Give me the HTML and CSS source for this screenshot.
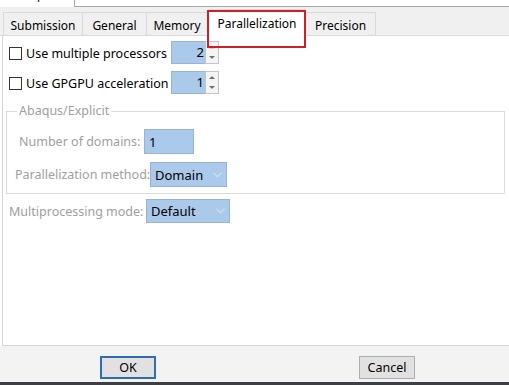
FILE: index.html
```html
<!DOCTYPE html>
<html>
<head>
<meta charset="utf-8">
<link rel="stylesheet" href="styles.css">
</head>
<body>
<div class="top">
  <div class="top-left"><span class="cut">p</span></div>
  <div class="top-right"></div>
</div>
<div class="tabstrip">
  <div class="tab t1">Submission</div>
  <div class="tab t2">General</div>
  <div class="tab t3">Memory</div>
  <div class="tab t4 active">Parallelization</div>
  <div class="tab t5">Precision</div>
</div>
<div class="panel">
  <div class="row chkrow">
    <label class="chk"><span class="box"></span><span class="chk-text">Use multiple processors</span></label>
    <div class="spin">
      <div class="spin-field">2</div>
      <div class="spin-btns">
        <span class="arr up faint"></span>
        <span class="arr down"></span>
      </div>
    </div>
  </div>
  <div class="row chkrow">
    <label class="chk"><span class="box"></span><span class="chk-text">Use GPGPU acceleration</span></label>
    <div class="spin">
      <div class="spin-field">1</div>
      <div class="spin-btns">
        <span class="arr up"></span>
        <span class="arr down"></span>
      </div>
    </div>
  </div>
  <fieldset class="group">
    <legend>Abaqus/Explicit</legend>
    <div class="frow f1">
      <span class="lbl l1">Number of domains:</span>
      <div class="field num">1</div>
    </div>
    <div class="frow f2">
      <span class="lbl l2">Parallelization method:</span>
      <div class="field combo c1"><span>Domain</span>
        <svg class="chev" width="9" height="6" viewBox="0 0 9 6"><polyline points="0.5,0.8 4.5,4.8 8.5,0.8" fill="none" stroke="#d3dae3" stroke-width="1.4"/></svg>
      </div>
    </div>
  </fieldset>
  <div class="frow f3">
    <span class="lbl l3">Multiprocessing mode:</span>
    <div class="field combo c2"><span>Default</span>
      <svg class="chev" width="9" height="6" viewBox="0 0 9 6"><polyline points="0.5,0.8 4.5,4.8 8.5,0.8" fill="none" stroke="#d3dae3" stroke-width="1.4"/></svg>
    </div>
  </div>
</div>
<div class="buttons">
  <button class="btn ok">OK</button>
  <button class="btn cancel">Cancel</button>
</div>
<div class="darkbar"></div>
<div class="highlight"></div>
</body>
</html>
```
FILE: styles.css
```css
html, body { margin: 0; padding: 0; }
body {
  width: 509px;
  height: 385px;
  overflow: hidden;
  display: flex;
  flex-direction: column;
  background: #ffffff;
  font-family: "Noto Sans", "Open Sans", sans-serif;
  font-size: 12.5px;
  color: #000;
  position: relative;
}
.top { height: 7px; display: flex; flex: none; }
.top-left {
  width: 74px;
  border-right: 1px solid #a8a8a8;
  overflow: hidden;
  background: #fff;
}
.cut {
  display: block;
  margin-top: -13px;
  margin-left: 37px;
  line-height: 16px;
  font-size: 12px;
}
.top-right { flex: 1; border-bottom: 1px solid #a8a8a8; background: #fff; }
.tabstrip {
  flex: none;
  height: 28px;
  background: #f0f0f0;
  border-bottom: 1px solid #d9d9d9;
  display: grid;
  grid-template-columns: 80px 64px 61px 98px 70px;
  align-items: end;
  padding-left: 3px;
  font-size: 12px;
}
.tab {
  height: 23px;
  box-sizing: border-box;
  border: 1px solid #d9d9d9;
  border-bottom: none;
  border-left: none;
  display: flex;
  align-items: center;
  justify-content: center;
  padding-top: 2px;
  background: #f0f0f0;
  color: #000;
}
.tab.t1 { border-left: 1px solid #d9d9d9; }
.tab.active {
  height: 27px;
  background: #fff;
  margin-bottom: -1px;
  padding-top: 1px;
  padding-bottom: 0;
  border-left: 1px solid #d9d9d9;
  position: relative;
  z-index: 1;
}
.panel {
  flex: 1;
  margin-left: 2px;
  border-left: 1px solid #d4d4d4;
  border-bottom: 1px solid #d4d4d4;
  padding: 5px 4px 0 3px;
  background: #fff;
}
.row { display: flex; align-items: center; }
.chkrow { height: 23px; padding-left: 3px; }
.chkrow + .chkrow { margin-top: 7px; }
.chk {
  width: 162px;
  display: flex;
  align-items: center;
  gap: 4px;
  white-space: nowrap;
}
.chk-text { padding-top: 2px; }
.box {
  width: 13px; height: 13px;
  box-sizing: border-box;
  border: 1px solid #333;
  background: #fff;
  flex: none;
  margin-top: 1px;
}
.spin { display: flex; height: 23px; }
.spin-field {
  width: 34px;
  box-sizing: border-box;
  background: #abc9eb;
  border: 1px solid #97b4d6;
  border-right: none;
  text-align: right;
  padding-right: 1px;
  line-height: 21px;
  font-size: 13px;
}
.spin-btns {
  width: 14px;
  box-sizing: border-box;
  border: 1px solid #c6c6c6;
  background: #f4f4f4;
  display: flex;
  flex-direction: column;
  align-items: center;
  justify-content: space-around;
}
.arr { width: 0; height: 0; border-left: 3px solid transparent; border-right: 3px solid transparent; }
.arr.up { border-bottom: 3px solid #707070; }
.arr.down { border-top: 3px solid #707070; }
.arr.faint { border-bottom-color: #d0d0d0; }
.group {
  margin: 9px 0 0 0;
  padding: 10px 0 6px 0;
  border: 1px solid #dcdcdc;
  min-width: 0;
}
.group legend {
  margin-left: 10px;
  padding: 0 2px;
  line-height: 16px;
  color: #a0a0a0;
}
.frow { display: flex; align-items: center; }
.lbl { color: #a0a0a0; white-space: nowrap; }
.f1 { padding-left: 12px; height: 25px; }
.f2 { padding-left: 8px; height: 25px; margin-top: 8px; }
.f3 { padding-left: 3px; height: 24px; margin-top: 5px; }
.l1 { width: 125px; }
.l2 { width: 135px; }
.l3 { width: 137px; }
.field {
  height: 100%;
  box-sizing: border-box;
  background: #abc9eb;
  border: 1px solid #97b4d6;
  display: flex;
  align-items: center;
  font-size: 13px;
}
.num { width: 50px; padding-left: 4px; }
.combo { justify-content: space-between; padding: 0 4px 0 4px; }
.c1 { width: 77px; }
.c2 { width: 84px; }
.chev { display: block; flex: none; }
.buttons {
  flex: none;
  height: 36px;
  background: #f3f3f3;
  display: flex;
  align-items: flex-start;
  padding: 10px 0 0 100px;
  box-sizing: border-box;
  gap: 203px;
}
.btn {
  width: 56px;
  height: 23px;
  box-sizing: border-box;
  font-family: "Noto Sans", "Open Sans", sans-serif;
  font-size: 12.5px;
  background: #e1e1e1;
  border: 1px solid #adadad;
  padding: 0;
  color: #000;
}
.btn.ok { border: 2px solid #2f6db3; }
.darkbar { flex: none; height: 3px; background: #3c4045; }
.highlight {
  position: absolute;
  left: 207px;
  top: 10px;
  width: 99px;
  height: 38px;
  box-sizing: border-box;
  border: 2px solid #cf2027;
  z-index: 5;
}
```
